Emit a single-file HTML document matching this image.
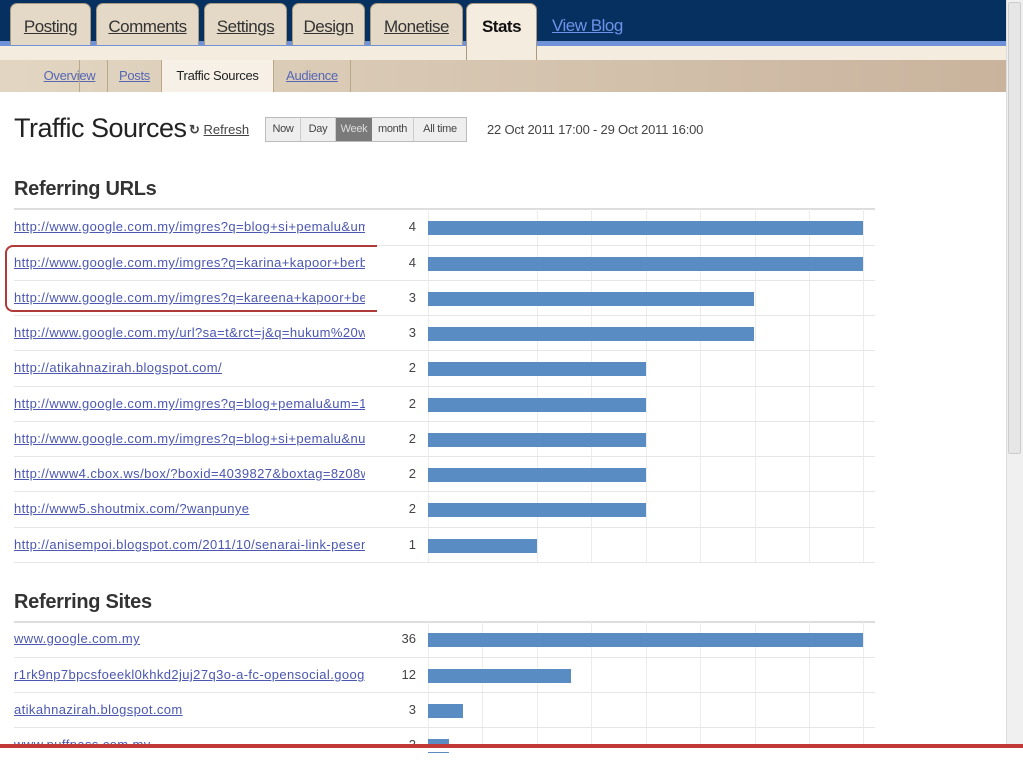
<!DOCTYPE html>
<html><head><meta charset="utf-8"><style>
*{margin:0;padding:0;box-sizing:border-box}
body{width:1023px;height:752px;overflow:hidden;background:#fff;font-family:"Liberation Sans",sans-serif;position:relative}
.a{position:absolute}
.tab{position:absolute;top:3px;height:42px;background:#e4d9c6;border:1px solid #a89a80;border-bottom:none;border-radius:7px 7px 0 0;font-size:17px;color:#333;text-decoration:underline;text-align:center;line-height:46px;letter-spacing:-0.5px}
.sub{position:absolute;top:60px;height:32px;line-height:32px;font-size:13px;color:#5567b5;text-decoration:underline;text-align:center;border-right:1px solid #b8a888;letter-spacing:-0.3px}
.row{position:absolute;left:14px;width:861px;height:35px;border-top:1px solid #e6e6e6}
.row a{position:absolute;left:0;top:9px;width:351px;overflow:hidden;white-space:nowrap;color:#4b57b0;font-size:13px;text-decoration:underline;letter-spacing:0.4px}
.row .n{position:absolute;right:459px;top:9px;font-size:13px;color:#444}
.row .b{position:absolute;left:414px;top:11px;height:14px;background:#5a8cc4}
.vl{position:absolute;width:1px;background:#ececec}
h2{position:absolute;left:14px;font-size:20px;font-weight:bold;color:#333;letter-spacing:-0.3px}
</style></head><body>
<div class="a" style="left:0;top:0;width:1006px;height:41px;background:#05305f"></div>
<div class="a" style="left:0;top:41px;width:1006px;height:5px;background:#6f92d8"></div>
<div class="a" style="left:0;top:46px;width:1006px;height:14px;background:#f5ece0"></div>
<div class="a" style="left:0;top:60px;width:1006px;height:32px;background:linear-gradient(90deg,#e2d6c2,#c9b39d)"></div>
<div class="tab" style="left:10px;width:81px">Posting</div>
<div class="tab" style="left:96px;width:103px">Comments</div>
<div class="tab" style="left:204px;width:83px">Settings</div>
<div class="tab" style="left:292px;width:73px">Design</div>
<div class="tab" style="left:370px;width:93px">Monetise</div>
<div class="tab" style="left:466px;width:71px;height:57px;background:#f5ece0;text-decoration:none;font-weight:bold;color:#111">Stats</div>
<div class="a" style="left:552px;top:16px;font-size:17px;color:#6f92e8;text-decoration:underline;letter-spacing:-0.5px">View Blog</div>
<div class="sub" style="left:32px;width:76px;border-left:none">Overview</div>
<div class="sub" style="left:79px;width:1px;border:none;background:#b8a888"></div>
<div class="sub" style="left:108px;width:54px">Posts</div>
<div class="sub" style="left:162px;width:112px;background:#f7f0e6;color:#222;text-decoration:none">Traffic Sources</div>
<div class="sub" style="left:274px;width:77px">Audience</div>
<div class="a" style="left:14px;top:113px;font-size:27px;color:#222;letter-spacing:-0.5px">Traffic Sources</div>
<div class="a" style="left:189px;top:122px;font-size:13px;color:#444"><span style="font-weight:bold">↻</span> <span style="text-decoration:underline">Refresh</span></div>
<div class="a" style="left:265px;top:117px;height:25px;width:202px;border:1px solid #bbb;background:#eee;font-size:11px;color:#444;display:flex;line-height:23px;letter-spacing:-0.3px">
<span style="width:35px;text-align:center;border-right:1px solid #ccc">Now</span><span style="width:35px;text-align:center;border-right:1px solid #ccc">Day</span><span style="width:36px;text-align:center;background:#7a7a7a;color:#ddd">Week</span><span style="width:42px;text-align:center;border-right:1px solid #ccc">month</span><span style="flex:1;text-align:center">All time</span></div>
<div class="a" style="left:487px;top:122px;font-size:13px;color:#444;letter-spacing:-0.2px">22 Oct 2011 17:00 - 29 Oct 2011 16:00</div>
<h2 style="top:178px">Referring URLs</h2>
<h2 style="top:591px">Referring Sites</h2>
<div class="a" style="left:14px;top:208px;width:861px;height:2px;background:#ddd"></div>
<div class="a" style="left:14px;top:621px;width:861px;height:2px;background:#ddd"></div>
<div class="vl" style="left:428px;top:209px;height:354px"></div>
<div class="vl" style="left:537px;top:209px;height:354px"></div>
<div class="vl" style="left:591px;top:209px;height:354px"></div>
<div class="vl" style="left:646px;top:209px;height:354px"></div>
<div class="vl" style="left:700px;top:209px;height:354px"></div>
<div class="vl" style="left:755px;top:209px;height:354px"></div>
<div class="vl" style="left:809px;top:209px;height:354px"></div>
<div class="vl" style="left:863px;top:209px;height:354px"></div>
<div class="vl" style="left:428px;top:622px;height:130px"></div>
<div class="vl" style="left:482px;top:622px;height:130px"></div>
<div class="vl" style="left:537px;top:622px;height:130px"></div>
<div class="vl" style="left:591px;top:622px;height:130px"></div>
<div class="vl" style="left:646px;top:622px;height:130px"></div>
<div class="vl" style="left:700px;top:622px;height:130px"></div>
<div class="vl" style="left:755px;top:622px;height:130px"></div>
<div class="vl" style="left:809px;top:622px;height:130px"></div>
<div class="vl" style="left:863px;top:622px;height:130px"></div>

<div class="row" style="top:210px;border-top:none"><a>http://www.google.com.my/imgres?q=blog+si+pemalu&amp;um=1</a><span class="n">4</span><span class="b" style="width:435px"></span></div>
<div class="row" style="top:245px"><a>http://www.google.com.my/imgres?q=karina+kapoor+berbogel</a><span class="n">4</span><span class="b" style="width:435px"></span></div>
<div class="row" style="top:280px"><a>http://www.google.com.my/imgres?q=kareena+kapoor+berbogel</a><span class="n">3</span><span class="b" style="width:326px"></span></div>
<div class="row" style="top:315px"><a>http://www.google.com.my/url?sa=t&amp;rct=j&amp;q=hukum%20wi</a><span class="n">3</span><span class="b" style="width:326px"></span></div>
<div class="row" style="top:350px"><a>http://atikahnazirah.blogspot.com/</a><span class="n">2</span><span class="b" style="width:218px"></span></div>
<div class="row" style="top:386px"><a>http://www.google.com.my/imgres?q=blog+pemalu&amp;um=18</a><span class="n">2</span><span class="b" style="width:218px"></span></div>
<div class="row" style="top:421px"><a>http://www.google.com.my/imgres?q=blog+si+pemalu&amp;num=1</a><span class="n">2</span><span class="b" style="width:218px"></span></div>
<div class="row" style="top:456px"><a>http://www4.cbox.ws/box/?boxid=4039827&amp;boxtag=8z08w</a><span class="n">2</span><span class="b" style="width:218px"></span></div>
<div class="row" style="top:491px"><a>http://www5.shoutmix.com/?wanpunye</a><span class="n">2</span><span class="b" style="width:218px"></span></div>
<div class="row" style="top:527px"><a>http://anisempoi.blogspot.com/2011/10/senarai-link-pesen</a><span class="n">1</span><span class="b" style="width:109px"></span></div>
<div class="a" style="left:14px;top:562px;width:861px;height:1px;background:#e6e6e6"></div>

<div class="row" style="top:622px;border-top:none"><a>www.google.com.my</a><span class="n">36</span><span class="b" style="width:435px"></span></div>
<div class="row" style="top:657px"><a>r1rk9np7bpcsfoeekl0khkd2juj27q3o-a-fc-opensocial.googleusercontent</a><span class="n">12</span><span class="b" style="width:143px"></span></div>
<div class="row" style="top:692px"><a>atikahnazirah.blogspot.com</a><span class="n">3</span><span class="b" style="width:35px"></span></div>
<div class="row" style="top:727px"><a>www.puffpass.com.my</a><span class="n">2</span><span class="b" style="width:21px"></span></div>

<div class="a" style="left:5px;top:245px;width:372px;height:67px;border:2px solid #b03a3a;border-right:none;border-radius:8px 0 0 8px"></div>
<div class="a" style="left:0;top:744px;width:1023px;height:4px;background:#c03838"></div>
<div class="a" style="left:0;top:748px;width:1023px;height:4px;background:#fff"></div>
<div class="a" style="left:1006px;top:0;width:17px;height:744px;background:#f0f0f0;border-left:1px solid #ddd"></div>
<div class="a" style="left:1008px;top:2px;width:13px;height:452px;background:#e6e6e6;border:1px solid #ccc;border-radius:2px"></div>
</body></html>
